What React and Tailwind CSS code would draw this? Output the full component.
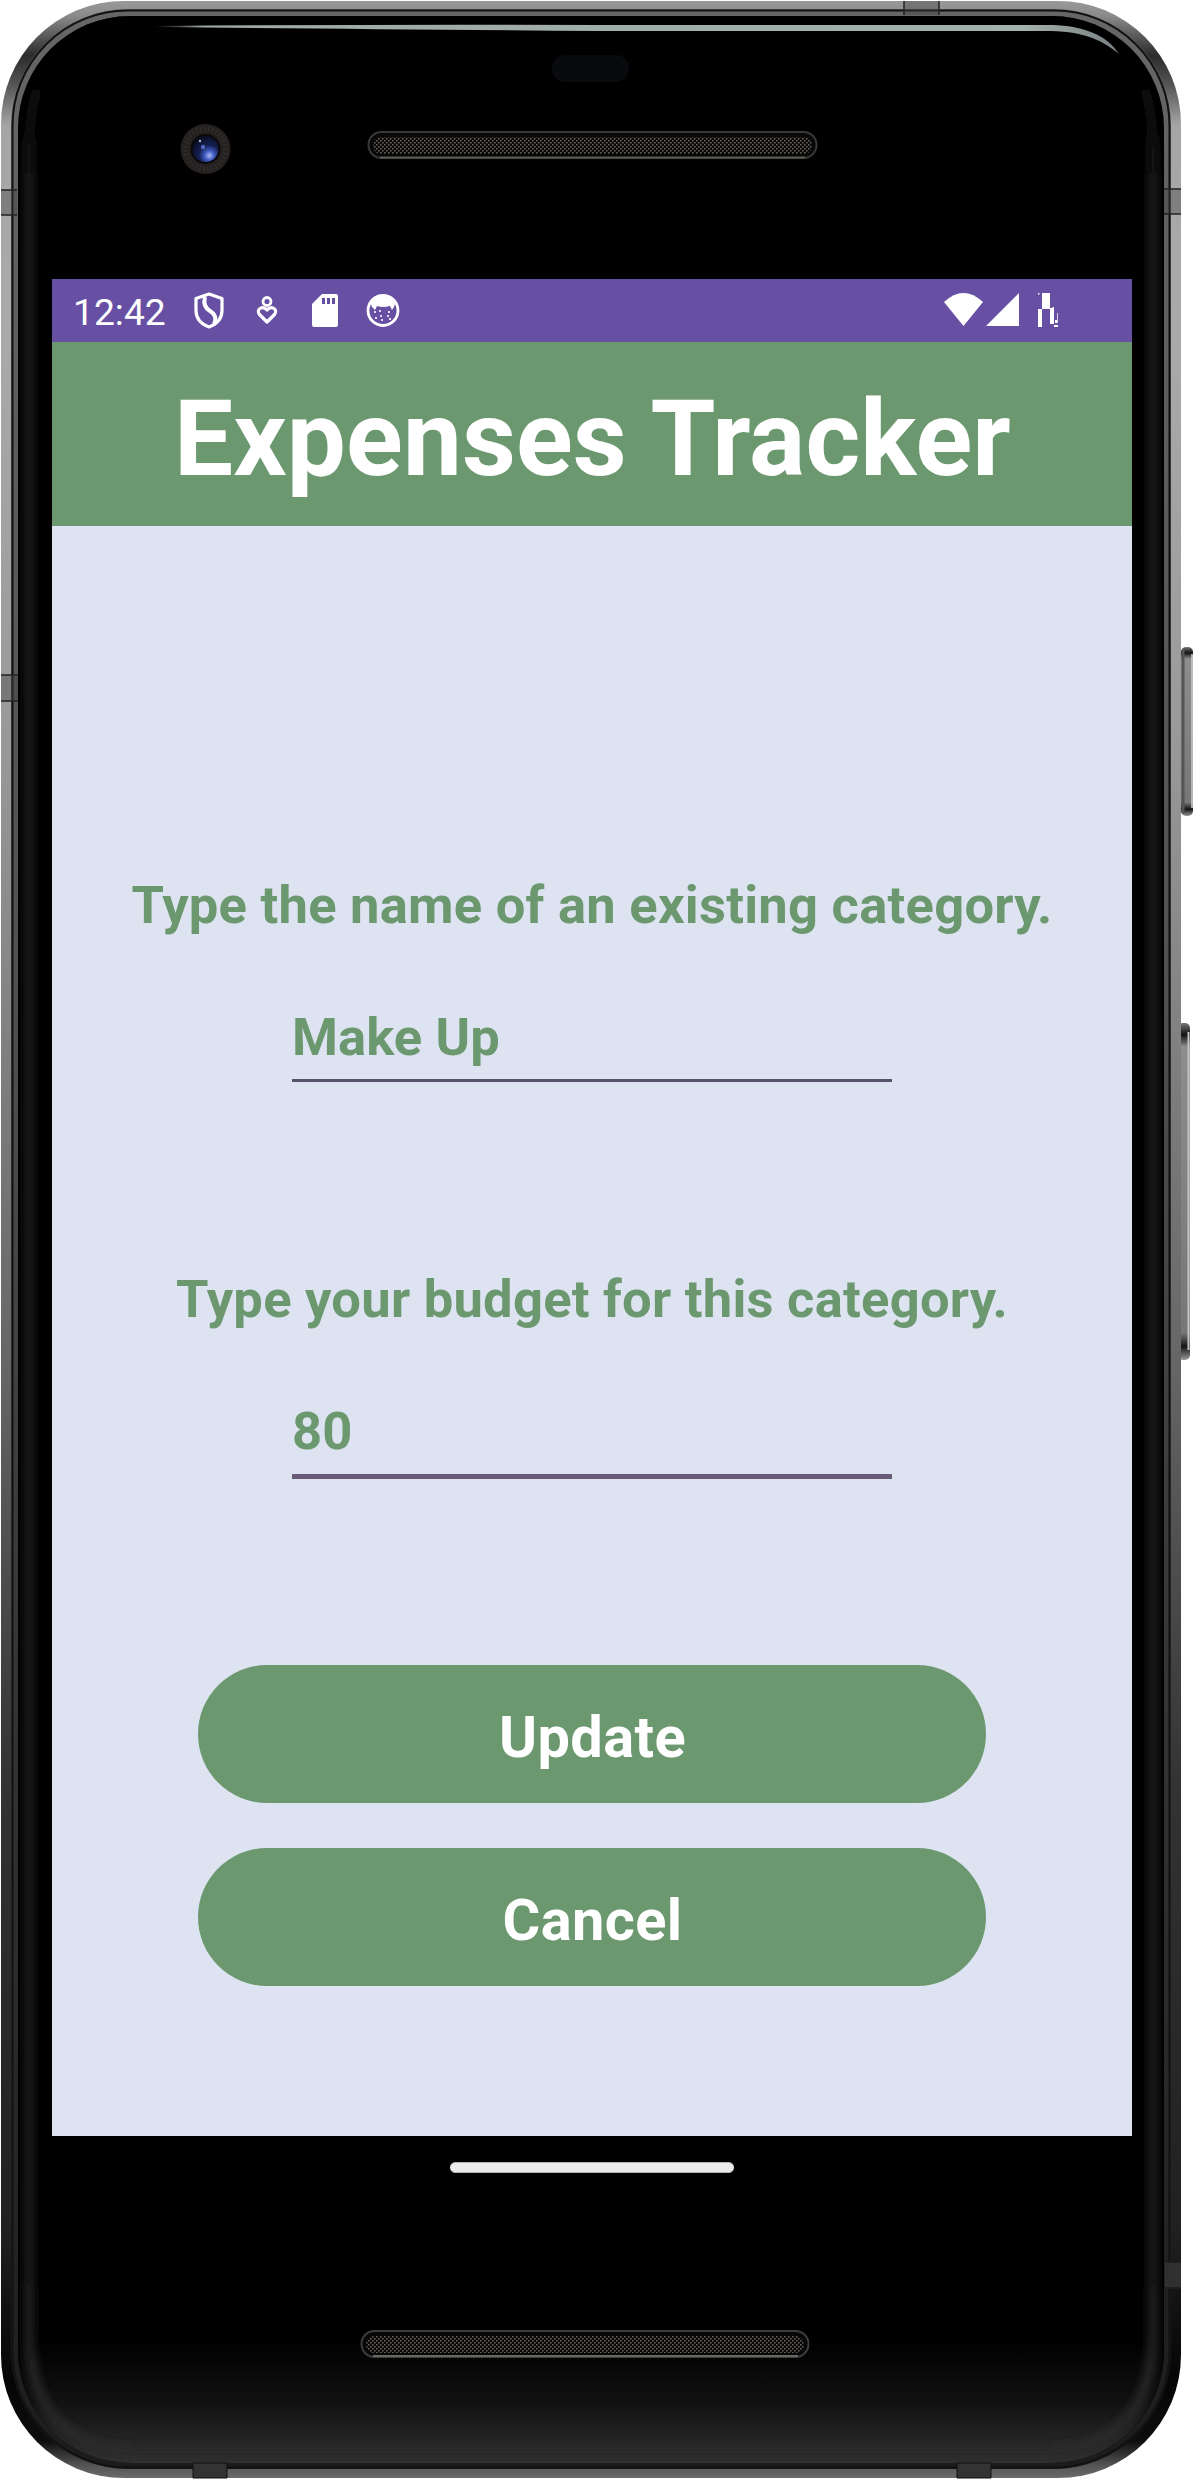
import React from "react";

function StatusIcons() {
  return (
    <svg className="h-[63px] w-[240px]" viewBox="180 279 240 63" fill="none" stroke="#fff">
      <path d="M209 294l13 4.500v12c0 8-5 13.500-13 16.500c-8-3-13-8.500-13-16.500v-12z" strokeWidth="3.200" strokeLinejoin="round" />
      <path d="M205 297c-2 7 0 11 5 14s7 8 4 13" strokeWidth="4" />
      <circle cx="267" cy="301.500" r="4" strokeWidth="2.800" />
      <path d="M267 322l-7.500-7.500c-4-5 3-9.500 7.500-4.500c4.500-5 11.500-.5 7.500 4.500z" strokeWidth="3.200" strokeLinejoin="round" />
      <path d="M322 294h14q2 0 2 2v29q0 2-2 2h-22q-2 0-2-2v-21z" fill="#fff" stroke="none" />
      <path d="M322 298h3v6h-3zM327 298h3v6h-3zM332 298h3v6h-3z" fill="#6750a4" stroke="none" />
      <circle cx="383" cy="310.500" r="15" strokeWidth="2.800" />
      <path d="M370 301c4-8 22-8 26 0l-2 6-2 3-2-4q-7 2-13 0l-2 4-3-3z" fill="#fff" stroke="none" />
      <path d="M374 312h2m3-1h2m7 1h2m-10 4h2m5 0h2m-14 2h2m4 2h2m6-1h2" strokeWidth="2" opacity=".8" />
    </svg>
  );
}

function SignalIcons() {
  return (
    <svg className="h-[63px] w-[120px]" viewBox="942 279 120 63" fill="#fff">
      <path d="M944 302q19.500-18 39 0l-19.500 24z" />
      <path d="M1019 293v33h-33z" />
      <path d="M1042 293h8v15h4v16h-4v-15h-8v18h-4v-18h4zM1038 293h1.500v1.500h-1.500zM1054 325h4v2h-4zM1055 320h2v3h-2zM1052.500 307h1.500v2h-1.500zM1057 313h.7v10h-.7z" />
    </svg>
  );
}

function PhoneShell() {
  return (
    <svg className="absolute inset-0 h-[2480px] w-[1194px]" viewBox="0 0 1194 2480" fill="none">
      <defs>
        <linearGradient id="rim" x2="0" y2="1">
          <stop offset="0" stopColor="#999" />
          <stop offset=".006" stopColor="#8a8a8a" />
          <stop offset=".022" stopColor="#2c2c2c" />
          <stop offset=".034" stopColor="#555" />
          <stop offset=".05" stopColor="#a5a5a5" />
          <stop offset=".13" stopColor="#aaa" />
          <stop offset=".3" stopColor="#999" />
          <stop offset=".55" stopColor="#666" />
          <stop offset=".72" stopColor="#333" />
          <stop offset=".9" stopColor="#202020" />
          <stop offset=".96" stopColor="#050505" />
          <stop offset=".985" stopColor="#0d0d0d" />
          <stop offset=".995" stopColor="#555" />
          <stop offset="1" stopColor="#6b6b6b" />
        </linearGradient>
        <linearGradient id="inner" x2="0" y2="1">
          <stop offset="0" stopColor="#666" />
          <stop offset=".4" stopColor="#505050" />
          <stop offset=".7" stopColor="#333" />
          <stop offset="1" stopColor="#1c1c1c" />
        </linearGradient>
        <linearGradient id="bottomGlow" x2="0" y2="1">
          <stop offset="0" stopColor="#000" />
          <stop offset=".5" stopColor="#111" />
          <stop offset="1" stopColor="#303030" />
        </linearGradient>
        <linearGradient id="edge" gradientUnits="userSpaceOnUse" x1="0" y1="60" x2="0" y2="2463">
          <stop offset="0" stopColor="#000" />
          <stop offset=".05" stopColor="#1b1b1b" />
          <stop offset=".9" stopColor="#1b1b1b" />
          <stop offset="1" stopColor="#2c2c2c" />
        </linearGradient>
        <linearGradient id="gleam" gradientUnits="userSpaceOnUse" x1="155" y1="0" x2="1120" y2="0">
          <stop offset="0" stopColor="#84908e" stopOpacity="0" />
          <stop offset=".05" stopColor="#9eaaa7" />
          <stop offset=".9" stopColor="#a4b0ad" />
          <stop offset="1" stopColor="#777f80" />
        </linearGradient>
        <linearGradient id="key" x2="0" y2="1">
          <stop offset="0" stopColor="#777" />
          <stop offset=".035" stopColor="#111" />
          <stop offset=".07" stopColor="#8d8d8d" />
          <stop offset=".92" stopColor="#777" />
          <stop offset=".96" stopColor="#151515" />
          <stop offset="1" stopColor="#999" />
        </linearGradient>
        <radialGradient id="lens" cx=".65" cy=".75" r=".8">
          <stop offset="0" stopColor="#a9b9f5" />
          <stop offset=".23" stopColor="#405bc0" />
          <stop offset=".5" stopColor="#142052" />
          <stop offset="1" stopColor="#080b1b" />
        </radialGradient>
        <pattern id="mesh" width="4" height="4" patternUnits="userSpaceOnUse">
          <path d="M0 0h1.600v1.600h-1.600zM2 2h1.600v1.600h-1.600z" fill="#6a645a" />
        </pattern>
        <filter id="soft" filterUnits="userSpaceOnUse" x="0" y="0" width="1194" height="2480">
          <feGaussianBlur stdDeviation="4.500" />
        </filter>
        <clipPath id="glass"><rect x="18" y="16" width="1146" height="2447" rx="112" /></clipPath>
      </defs>
      <rect x="1181" y="647" width="12" height="169" rx="5" fill="url(#key)" />
      <path d="M1183 650v163" stroke="#555" strokeWidth="3" />
      <path d="M1192 654v154" stroke="#ccc" strokeWidth="1.500" />
      <rect x="1178" y="1023" width="12" height="337" rx="5" fill="url(#key)" />
      <path d="M1188.500 1032v318" stroke="#c5c5c5" strokeWidth="2" />
      <rect x="1" y="1" width="1180" height="2477" rx="123" fill="url(#rim)" />
      <rect x="11" y="9" width="1160" height="2460" rx="117" fill="url(#inner)" />
      <rect x="12.500" y="10.500" width="1157" height="2457" rx="115" stroke="#111" strokeWidth="2" />
      <rect x="18" y="16" width="1146" height="2447" rx="112" fill="#000" />
      <g clipPath="url(#glass)">
        <rect x="18" y="2340" width="1146" height="123" fill="url(#bottomGlow)" />
        <path d="M125 16Q29 30 29 150V2330Q29 2452 145 2452H1038Q1153 2452 1153 2330V150Q1153 30 1055 16" stroke="url(#edge)" strokeWidth="10" filter="url(#soft)" />
      </g>
      <path d="M155 26Q400 24 600 25H1048C1083 25 1107 35 1119 54C1100 38 1080 31 1045 31H600Q350 29 155 27Z" fill="url(#gleam)" />
      <path d="M904 1h35v14h-35zM1 190h16v25h-16zM1 675h17v26h-17zM1164 189h17v25h-17z" fill="#444" fillOpacity=".4" />
      <path d="M904 1v14M939 1v14M1 190h16M1 215h16M1 675h17M1 701h17M1164 189h17M1164 214h17M1164 2262h17M1164 2288h17" stroke="#222" strokeWidth="1.500" />
      <path d="M193 2463h34v15h-34zM957 2463h34v15h-34z" fill="#333" stroke="#111" />
      <path d="M1165 2263h16v24h-16z" fill="#303030" />
      <circle cx="205.500" cy="149" r="25" fill="#242120" />
      <circle cx="205.500" cy="149" r="20" stroke="#2f2c2a" strokeWidth="5" strokeDasharray="1.500 2.500" />
      <circle cx="205.500" cy="149" r="15" fill="#090909" />
      <circle cx="205.500" cy="149" r="13" fill="url(#lens)" />
      <circle cx="203" cy="147" r="2.200" fill="#5269be" />
      <circle cx="200" cy="141" r="1.200" fill="#b4bbdf" />
      <rect x="552" y="55" width="77" height="27" rx="13" fill="#090a0e" />
      <rect x="368.500" y="132" width="448" height="26" rx="13" fill="#080808" stroke="#383838" strokeWidth="2" />
      <rect x="373" y="137" width="439" height="17" rx="8" fill="url(#mesh)" />
      <path d="M380 157.500h425" stroke="#5c5b55" strokeWidth="2" />
      <rect x="361.500" y="2331" width="447" height="26" rx="13" fill="#080808" stroke="#3d3d3d" strokeWidth="2" />
      <rect x="366" y="2336" width="438" height="17" rx="8" fill="url(#mesh)" />
      <path d="M373 2356h425" stroke="#6b6863" strokeWidth="2" />
    </svg>
  );
}

function Field({ label, value, active }) {
  return (
    <section className="flex flex-col items-center">
      <h2 className="h-[62px] text-[52.5px] leading-[62px] font-bold tracking-[0.25px] whitespace-nowrap">{label}</h2>
      <div className={active ? "mt-[58px] flex h-[91px] w-[600px] items-start border-b-[5px] border-[#675b78]" : "mt-[58px] flex h-[88px] w-[600px] items-start border-b-[3px] border-[#56536c]"}>
        <span className="mt-[12px] text-[52.5px] leading-[62px] font-bold tracking-[0.1px]">{value}</span>
      </div>
    </section>
  );
}

function ActionButton({ children }) {
  return (
    <button className="flex h-[138px] w-[788px] items-center justify-center rounded-full bg-[#6b986e] pt-[6px] pl-[1px] text-[57.75px] leading-[68px] font-bold tracking-[0.4px] text-white">
      {children}
    </button>
  );
}

export default function App() {
  return (
    <div className="relative h-[2480px] w-[1194px] overflow-hidden bg-white font-['Roboto',sans-serif]">
      <PhoneShell />
      <div className="relative flex flex-col pt-[279px] pl-[52px]">
        <main className="flex h-[1857px] w-[1080px] flex-col bg-[#dde3f1] text-[#6b986e]">
          <div className="flex h-[63px] shrink-0 items-center justify-between bg-[#6750a4] pr-[70px] pl-[21px] text-white">
            <div className="flex items-center gap-[14px]">
              <span className="w-[93px] pt-[3px] text-[37.25px] leading-[60px]">12:42</span>
              <StatusIcons />
            </div>
            <SignalIcons />
          </div>
          <header className="flex h-[184px] shrink-0 items-center justify-center bg-[#6b986e] pt-[10px] pl-[1px] text-[105px] leading-[123px] font-bold tracking-[0.15px] text-white">
            <h1>Expenses Tracker</h1>
          </header>
          <div className="flex flex-col items-center pt-[348px]">
            <Field label="Type the name of an existing category." value="Make Up" />
            <div className="h-[186px]" />
            <Field label="Type your budget for this category." value="80" active />
            <div className="mt-[186px] flex flex-col gap-[45px]">
              <ActionButton>Update</ActionButton>
              <ActionButton>Cancel</ActionButton>
            </div>
          </div>
        </main>
        <div className="mt-[26px] ml-[398px] h-[11px] w-[284px] rounded-full border-y border-[#b5b5b5] bg-[#ebebeb]" />
      </div>
    </div>
  );
}
